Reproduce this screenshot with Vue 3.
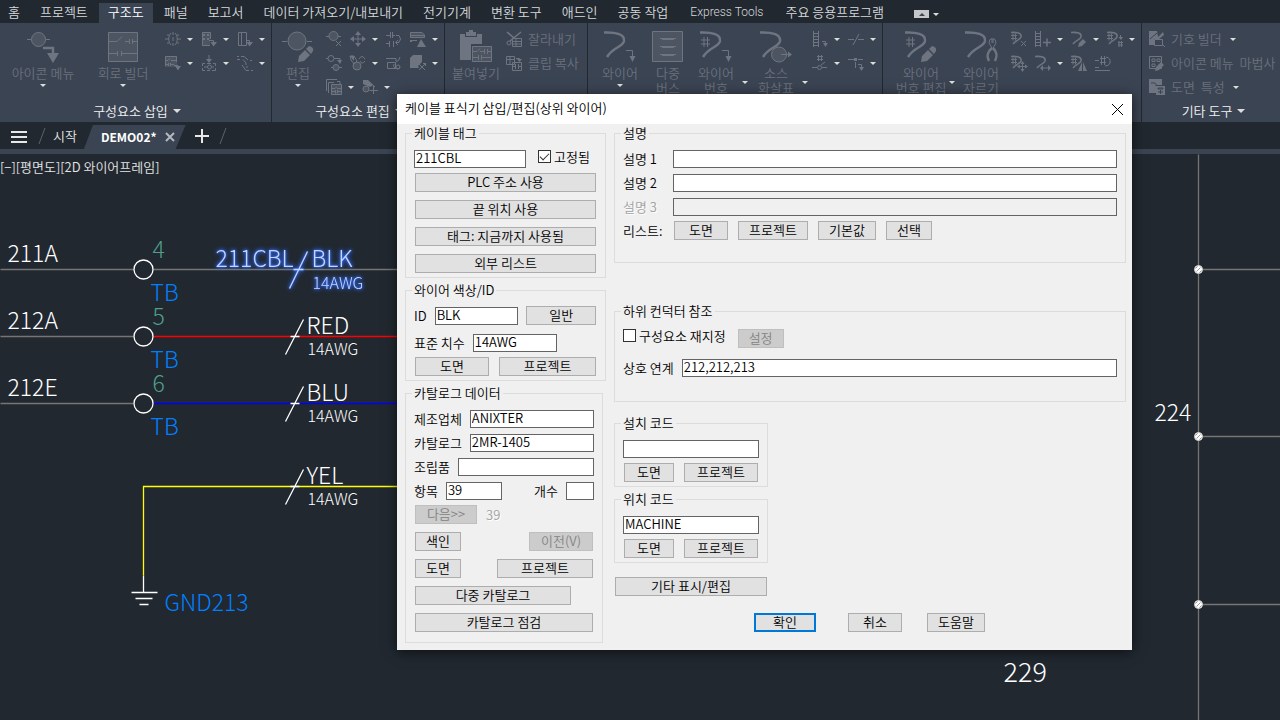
<template>
  <div class="cad-app">
    <!-- Menu tabs -->
    <nav class="menu-bar">
      <button
        v-for="item in menuItems"
        :key="item"
        type="button"
        :class="['menu-item', { active: item === activeMenu, latin: item === 'Express Tools' }]"
        @click="activeMenu = item"
      >
        {{ item }}
      </button>
      <button type="button" class="menu-toggle" aria-label="리본 최소화">
        <span class="toggle-box"><span class="caret up"></span></span>
        <span class="caret small"></span>
      </button>
    </nav>

    <!-- Ribbon -->
    <div class="ribbon">
      <section v-for="panel in panels" :key="panel.id" :class="['panel', panel.id]">
        <div class="panel-body">
          <button v-for="(big, i) in panel.big" :key="i" type="button" class="big-button" disabled>
            <span class="big-main">
              <RibbonIcon :name="big.icon" :size="32" />
              <span class="big-label">{{ big.label }}</span>
              <span v-if="big.caret === 'below'" class="caret small"></span>
            </span>
            <span v-if="big.caret === 'side'" class="caret small side"></span>
          </button>
          <div class="tool-rows">
            <div v-for="(row, r) in panel.rows" :key="r" class="tool-row">
              <button
                v-for="tool in row"
                :key="tool.icon"
                type="button"
                :class="['tool', { 'with-caret': tool.caret }]"
                :aria-label="tool.label ? null : tool.icon"
                disabled
              >
                <RibbonIcon :name="tool.icon" :size="16" />
                <span v-if="tool.label" class="tool-label">{{ tool.label }}</span>
                <span v-if="tool.caret" class="caret small"></span>
              </button>
            </div>
          </div>
        </div>
        <div class="panel-title">
          <template v-if="panel.title">{{ panel.title }}<span class="caret"></span></template>
        </div>
      </section>
    </div>

    <!-- Document tabs -->
    <div class="doc-tabs">
      <button type="button" class="hamburger" aria-label="메뉴">
        <span></span><span></span><span></span>
      </button>
      <svg class="slash" width="8" height="18" viewBox="0 0 8 18"><path d="M1 17L7 1" /></svg>
      <button type="button" class="doc-tab">시작</button>
      <div class="doc-tab current">
        <span>DEMO02*</span>
        <button type="button" class="tab-close" aria-label="닫기">
          <svg width="10" height="10" viewBox="0 0 10 10"><path d="M1 1L9 9M9 1L1 9" /></svg>
        </button>
      </div>
      <button type="button" class="tab-add" aria-label="새 도면">
        <svg width="14" height="14" viewBox="0 0 14 14"><path d="M7 0V14M0 7H14" /></svg>
      </button>
      <svg class="slash" width="8" height="18" viewBox="0 0 8 18"><path d="M1 17L7 1" /></svg>
    </div>

    <!-- Drawing area -->
    <main class="drawing">
      <div class="view-controls">[−][평면도][2D 와이어프레임]</div>
      <svg class="schematic" width="100%" height="100%">
        <!-- Half pixel shift keeps the one pixel lines on the grid -->
        <g transform="translate(0.5 0.5)">
          <!-- Right hand ladder -->
          <line class="wire" x1="1198" y1="0" x2="1198" y2="100%" />
          <g v-for="y in [115, 282, 450]" :key="y">
            <line class="wire" x1="1198" :y1="y" x2="100%" :y2="y" />
            <circle class="node" cx="1198" :cy="y" r="4" />
            <path class="hatch" :d="`M1195 ${y - 1}l2 -2M1196 ${y + 2}l4 -4M1199 ${y + 3}l2 -2`" />
          </g>

          <!-- Terminals and wires -->
          <g v-for="t in terminals" :key="t.no">
            <line class="wire" x1="0" :y1="t.y" x2="133" :y2="t.y" />
            <line class="wire" :class="t.wire" x1="153" :y1="t.y" x2="420" :y2="t.y" />
            <circle class="terminal" cx="143" :cy="t.y" r="9.5" />
            <text class="cad" x="7" :y="t.y - 8">{{ t.name }}</text>
            <text class="cad pin" x="152" :y="t.y - 12">{{ t.no }}</text>
            <text class="cad blue-text" x="150" :y="t.y + 31">TB</text>
          </g>

          <!-- Ground -->
          <path class="wire yellow" d="M420 332H143V421" />
          <path class="ground" d="M143 421V438M131 438H157M135 444H152M139 450H148" />
          <text class="cad blue-text" x="164" y="456">GND213</text>

          <!-- Cable markers -->
          <g v-for="m in markers" :key="m.color">
            <path class="marker" :d="`M285 ${m.y + 18}L303 ${m.y - 17}M290 ${m.y}H299`" />
            <text class="cad" x="306" :y="m.y - 3">{{ m.color }}</text>
            <text class="cad gauge" x="307" :y="m.y + 18">14AWG</text>
          </g>
          <g class="selected">
            <path class="marker" d="M289 134L307 97M293 115H303" />
            <text class="cad" x="215" y="112">211CBL</text>
            <text class="cad" x="311" y="112">BLK</text>
            <text class="cad gauge" x="312" y="134">14AWG</text>
          </g>

          <text class="cad" x="1154" y="266">224</text>
          <text class="cad large" x="1003" y="527">229</text>
        </g>
      </svg>
    </main>

    <!-- Cable marker dialog -->
    <div class="dialog" role="dialog" aria-labelledby="dialog-title">
      <header class="dialog-header">
        <h1 id="dialog-title">케이블 표식기 삽입/편집(상위 와이어)</h1>
        <button type="button" class="dialog-close" aria-label="닫기">
          <svg width="11" height="11" viewBox="0 0 11 11"><path d="M0 0L11 11M11 0L0 11" /></svg>
        </button>
      </header>

      <div class="dialog-body">
        <form class="column-left" @submit.prevent>
          <fieldset class="tag-group">
            <legend>케이블 태그</legend>
            <div class="row tag-row">
              <input id="tag" v-model="form.tag" type="text" aria-label="케이블 태그" class="w112" />
              <input id="fixed" v-model="form.fixed" type="checkbox" />
              <label for="fixed">고정됨</label>
            </div>
            <div class="stack">
              <button type="button">PLC 주소 사용</button>
              <button type="button">끝 위치 사용</button>
              <button type="button">태그: 지금까지 사용됨</button>
              <button type="button">외부 리스트</button>
            </div>
          </fieldset>

          <fieldset class="color-group">
            <legend>와이어 색상/ID</legend>
            <div class="row">
              <label for="wire-id">ID</label>
              <input id="wire-id" v-model="form.wireId" type="text" class="w84" />
              <button type="button" class="w70 push">일반</button>
            </div>
            <div class="row gauge-row">
              <label for="gauge">표준 치수</label>
              <input id="gauge" v-model="form.gauge" type="text" class="w84" />
            </div>
            <div class="row">
              <button type="button" class="w74">도면</button>
              <button type="button" class="grow">프로젝트</button>
            </div>
          </fieldset>

          <fieldset class="catalog-group">
            <legend>카탈로그 데이터</legend>
            <div class="fields">
              <div class="row">
                <label for="maker">제조업체</label>
                <input id="maker" v-model="form.maker" type="text" class="grow" />
              </div>
              <div class="row">
                <label for="catalog">카탈로그</label>
                <input id="catalog" v-model="form.catalog" type="text" class="grow" />
              </div>
              <div class="row">
                <label for="assembly">조립품</label>
                <input id="assembly" v-model="form.assembly" type="text" class="grow" />
              </div>
              <div class="row">
                <label for="item">항목</label>
                <input id="item" v-model="form.item" type="text" class="w56" />
                <label for="count" class="push">개수</label>
                <input id="count" v-model="form.count" type="text" class="w28" />
              </div>
            </div>
            <div class="stack">
              <div class="row">
                <button type="button" class="w62" disabled>다음&gt;&gt;</button>
                <span class="disabled-text">39</span>
              </div>
              <div class="row">
                <button type="button" class="w46">색인</button>
                <button type="button" class="w64 push" disabled>이전(V)</button>
              </div>
              <div class="row">
                <button type="button" class="w46">도면</button>
                <button type="button" class="w96 push">프로젝트</button>
              </div>
              <button type="button" class="w156">다중 카탈로그</button>
              <button type="button">카탈로그 점검</button>
            </div>
          </fieldset>
        </form>

        <form class="column-right" @submit.prevent>
          <fieldset class="desc-group">
            <legend>설명</legend>
            <div class="fields">
              <div class="row">
                <label for="desc1" class="desc-label">설명 1</label>
                <input id="desc1" v-model="form.desc1" type="text" class="grow" />
              </div>
              <div class="row">
                <label for="desc2" class="desc-label">설명 2</label>
                <input id="desc2" v-model="form.desc2" type="text" class="grow" />
              </div>
              <div class="row">
                <label for="desc3" class="desc-label disabled-text">설명 3</label>
                <input id="desc3" type="text" class="grow" disabled />
              </div>
            </div>
            <div class="row list-row">
              <span class="desc-label">리스트:</span>
              <button type="button" class="w54">도면</button>
              <button type="button" class="w70">프로젝트</button>
              <button type="button" class="w58">기본값</button>
              <button type="button" class="w46">선택</button>
            </div>
          </fieldset>

          <fieldset class="ref-group">
            <legend>하위 컨덕터 참조</legend>
            <div class="row ref-row">
              <input id="retag" v-model="form.retag" type="checkbox" />
              <label for="retag">구성요소 재지정</label>
              <button type="button" class="w46" disabled>설정</button>
            </div>
            <div class="row">
              <label for="xref">상호 연계</label>
              <input id="xref" v-model="form.xref" type="text" class="grow" />
            </div>
          </fieldset>

          <div class="code-groups">
            <fieldset v-for="code in codes" :key="code.id">
              <legend>{{ code.label }}</legend>
              <div class="row">
                <input :id="code.id" v-model="form[code.id]" type="text" :aria-label="code.label" class="grow" />
              </div>
              <div class="row code-buttons">
                <button type="button" class="w50">도면</button>
                <button type="button" class="grow">프로젝트</button>
              </div>
            </fieldset>
            <button type="button" class="misc-button">기타 표시/편집</button>
          </div>

          <div class="dialog-actions">
            <button type="submit" class="primary w62">확인</button>
            <button type="button" class="w54">취소</button>
            <button type="button" class="w58">도움말</button>
          </div>
        </form>
      </div>
    </div>
  </div>
</template>

<script setup>
import { h, reactive, ref } from 'vue'

const menuItems = [
  '홈', '프로젝트', '구조도', '패널', '보고서', '데이터 가져오기/내보내기', '전기기계',
  '변환 도구', '애드인', '공동 작업', 'Express Tools', '주요 응용프로그램'
]
const activeMenu = ref('구조도')

// Shared pieces of the wire icons
const WIRE = 'M0 2.5C11 2 21 4 20 11C19 17 9 17 3 27'
const SMALL_WIRE = 'M0 1.5C6 1 11 2 10 6C9 9 5 9 2 13'
const HASH = 'M1 10H10M1 14H10M4 7V17M7.5 7V17'
const SMALL_HASH = 'M0 4.5H6M0 7.5H6M2 2.5V9.5M4.5 2.5V9.5'
const PENCIL = 'M16 32L17 26L23 20L28 25L22 31ZM24 19L27 16Q32 17 31 21L29 24Z'

// s: thin strokes, b: bold strokes, f: solid shapes, m: muted shapes, k: cut-out strokes
const icons = {
  iconMenu: { m: 'M4.5 9.5a7 7 0 1 0 14 0a7 7 0 1 0 -14 0', s: 'M4.5 9.5a7 7 0 1 0 14 0a7 7 0 1 0 -14 0M0 9.5H4M19 9.5H23', b: 'M16 18H26V24', f: 'M20 23H32L26 33Z' },
  circuitBuilder: { m: 'M1.5 2.5H30.5V31.5H1.5Z', s: 'M1.5 2.5H30.5V31.5H1.5ZM2 11.5H10L15 6.5M18 11.5H22.5M22.5 9V14M25.5 9V14M25.5 11.5H30M2 23.5H10.5M10.5 21V26M14.5 21V26M14.5 23.5H30' },
  edit: { m: 'M6 11a9 9 0 1 0 18 0a9 9 0 1 0 -18 0', s: 'M6 11a9 9 0 1 0 18 0a9 9 0 1 0 -18 0M0 11.5H5M25 11.5H30', f: PENCIL },
  paste: { f: 'M0 4H5V7H17V4H22V14H11V30H0ZM6 2H9V0H13V2H16V6H6Z', m: 'M12 16.5H31.5V32H12Z', s: 'M12.5 16.5H31.5V31.5H12.5ZM13 21.5H17L20 18.5M20 21.5H24M24.5 19V24M27.5 19V24M27.5 21.5H31M13 27.5H18.5M18.5 25V30M21.5 25V30M21.5 27.5H31' },
  wire: { b: WIRE, s: 'M22 20.5H28.5V27', f: 'M25.5 26H31.5L28.5 32Z' },
  multiBus: { m: 'M.5 1.5H30.5V31.5H.5Z', s: 'M.5 1.5H30.5V31.5H.5ZM8 8.5H24M8 16.5H24M8 24.5H24M10 9.5H22M10 17.5H22M10 25.5H22' },
  wireNumber: { b: WIRE, s: HASH + 'M22 20.5H28.5V27', f: 'M25.5 26H31.5L28.5 32Z' },
  source: { b: WIRE, m: 'M11.5 24.5a7.5 7.5 0 1 0 15 0a7.5 7.5 0 1 0 -15 0', s: 'M11.5 24.5a7.5 7.5 0 1 0 15 0a7.5 7.5 0 1 0 -15 0M21 24.5H29', f: 'M28 21.5L32 24.5L28 27.5Z' },
  numberEdit: { b: WIRE, s: HASH, f: PENCIL },
  wireCut: { b: WIRE + 'M27 18C21 23 22 27 24 31M28 18C33 23 32 27 30 31', s: 'M27 18L24 13Q24 9 27 8.5V13M28 18L31 13Q31 9 28 8.5V13' },

  multiInsert: { s: 'M0 8H4M12 8H16M6 2C3 5 3 11 6 14M10 2C13 5 13 11 10 14M8 1V4M8 6V10M8 12V15M2 4H4M12 4H14M2 12H4M12 12H14' },
  plcInsert: { m: 'M1 1H9V15H1Z', s: 'M9.5 8V1.5H1.5V14.5H9M8 9.5H12.5V12', f: 'M2 3H4V5H2ZM6 3H8V5H6ZM2 7H4V9H2ZM6 7H8V9H6ZM9.5 11H16L12.5 15.5Z' },
  connector: { s: 'M1.5 1.5H4.5V14.5H1.5ZM4.5 1.5H9.5V14.5H4.5M9 9.5H12.5V12', f: 'M9.5 11H16L12.5 15.5Z' },
  circuitInsert: { m: 'M0 1H12V12H0Z', s: 'M.5 11V1.5H11.5V7M1 5.5H3L5 3.5M6 5.5H11M1 9.5H3M3.5 8V11M5.5 8V11M6 9.5H9M9 10.5H13V12', f: 'M10 11H16L13 15.5Z' },
  panelList: { s: 'M8 0V5M1.5 8.5H4M6 8.5H10M12 8.5H14.5V11M14.5 13V15.5H11M9 15.5H6M4 15.5H1.5V13M1.5 11V8.5M6.5 12a2 2 0 1 0 4 0a2 2 0 1 0 -4 0M3 12H6M11 12H13', f: 'M5 4H11L8 8Z' },
  brokenLines: { s: 'M0 1.5H2M4 1.5H7L11 5M0 4.5H3M6 4.5L9 8V10M9 12H11M13 5.5H15M5 10L9 15.5H12M14 15.5H16' },

  deleteComp: { m: 'M3 5a4.5 4.5 0 1 0 9 0a4.5 4.5 0 1 0 -9 0', s: 'M3 5a4.5 4.5 0 1 0 9 0a4.5 4.5 0 1 0 -9 0M0 5.5H3M12 5.5H15M10 10L15 15M15 10L10 15' },
  move: { s: 'M8 3V13M3 8H13', f: 'M8 0L11 4H5ZM8 16L11 12H5ZM0 8L4 5V11ZM16 8L12 5V11Z' },
  swap: { s: 'M0 4.5H4M4.5 1V7M6.5 1V7M7 4.5H9M0 12.5H3M3.5 10V16M7.5 10V16M10 4.5H13Q16 8 13 11.5H10M12 9L9.5 11.5L12 14' },
  align: { f: 'M11 8L16 16H7ZM0 9H7V10H2V11H0Z', m: 'M0 1H12L14 4V7H0Z', s: 'M.5 1.5H12L14.5 4V6.5H.5ZM1 4.5H14' },
  copyComp: { m: 'M7 12.5a3 3 0 1 0 6 0a3 3 0 1 0 -6 0', s: 'M2 3.5a3 3 0 1 0 6 0a3 3 0 1 0 -6 0M0 3.5H2M8 3.5H14V7M7 12.5a3 3 0 1 0 6 0a3 3 0 1 0 -6 0M5 12.5H7M13 12.5H16', f: 'M11 5H16L14 9Z' },
  retag: { m: 'M3 11a4 4 0 1 0 8 0a4 4 0 1 0 -8 0', s: 'M0 1H4L7 6L4 9L1 5ZM3 11a4 4 0 1 0 8 0a4 4 0 1 0 -8 0M9 4Q12 -1 15 4M15 6Q12 10 10 6', f: 'M0 1H4V6Z' },
  route: { s: 'M0 3.5H10V6M1.5 7.5H9.5V13.5H1.5ZM8 9a3 3 0 1 0 6 3M10 12a2 2 0 1 0 4 0a2 2 0 1 0 -4 0M10 7Q14 5 14 2' },
  explode: { f: 'M0 3L3 0H12V7L8 11L9 13H0Z', s: 'M9 9L15 15M15 9L9 15M13 8.5H16M15.5 8V11' },
  batchEdit: { m: 'M5 5H16V16H5Z', s: 'M.5 12V.5H11M2.5 14V3.5H8M11 2.5H14V5M5.5 5.5H15.5V15.5H5.5ZM6 9.5H9L11 7.5M11 9.5H15M6 12.5H9M9.5 11V14.5M11.5 11V14.5M12 12.5H15' },
  moveTag: { m: 'M1 10a3 3 0 1 0 6 0a3 3 0 1 0 -6 0', s: 'M1 2H6L13 8M1 10a3 3 0 1 0 6 0a3 3 0 1 0 -6 0M11.5 7V15M7.5 11.5H16', f: 'M1 1H6L11 6L8 8L1 5Z' },

  cut: { s: 'M1 12a2 2 0 1 0 4 0a2 2 0 1 0 -4 0M6.5 7.5H15.5V15.5H6.5ZM7 10.5H15M7 13H15M10 8V15', b: 'M1 1L8 7M15 1L4 10' },
  clipCopy: { s: 'M.5 1.5H8.5V9.5H.5ZM1 4.5H8M4 2V9M10 3.5H13.5V5M6.5 7.5H15.5V15.5H6.5ZM7 11.5H9M9.5 9V14M12.5 9V14M13 11.5H15', f: 'M11 4H16L13.5 7Z' },

  ladder: { s: 'M1.5 0V16M6.5 0V16M2 2.5H6M2 5.5H6M2 8.5H6M2 11.5H6M2 14.5H6M10 10.5H13.5V13', f: 'M11 12H16L13.5 16Z' },
  gap: { s: 'M0 8.5H6M10 8.5H16M5 14L11 3' },
  numberInline: { s: 'M5 1.5H11M5 4.5H11M6.5 0V6M9.5 0V6M0 12.5H5M5.5 12.5a2 2 0 1 0 4 0a2 2 0 1 0 -4 0M10 12.5H15M9 10L13 7' },
  tee: { s: 'M0 4.5H6M8 4.5H9M10 4.5H15M7.5 7V13M10 9.5H13.5V12', f: 'M6 3H9V6H6ZM11 12H16L13.5 16Z' },

  numberDelete: { b: SMALL_WIRE, s: SMALL_HASH + 'M10 10L15 15M15 10L10 15' },
  rungAdd: { s: 'M.5 0V16M5.5 0V16M1 2.5H5M1 5.5H5M1 8.5H5M1 11.5H5M1 14.5H5', b: 'M8 11.5H16M12 7.5V15.5' },
  wireEdit: { b: SMALL_WIRE, f: 'M7 16L8 12L12 8L15 11L11 15Z' },
  numberFix: { b: SMALL_WIRE, s: SMALL_HASH + 'M13.5 4V8M11 11.5H16M11 14H16M12 10V16M14.5 10V16', f: 'M11.5 6H16L14 9Z' },
  numberMove: { b: SMALL_WIRE, s: SMALL_HASH + 'M11.5 8V15M8 11.5H15', f: 'M11.5 6L13.5 9H9.5ZM11.5 17L13.5 14H9.5ZM6 11.5L9 9.5V13.5ZM17 11.5L14 9.5V13.5Z' },
  wireStretch: { b: SMALL_WIRE, s: 'M7 13H15', f: 'M5 13L8 10V16ZM16 13L13 10V16Z' },
  numberFlip: { b: SMALL_WIRE, s: SMALL_HASH, f: 'M11 7V16H7ZM12 7L16 16H12Z' },
  numberToggle: { s: 'M0 5.5H4M5 3.5H11M5 7.5H11M6.5 1V10M9.5 1V10M11 2Q16 3 15 8Q14 11 10 11M0 15.5H15M0 12.5H4' },

  symbolBuilder: { f: 'M0 0H8L9 6L14 1L15 4L10 8H5V14H0Z', s: 'M5.5 8.5H13.5V14.5H5.5ZM13 13L16 16', k: 'M1 8L8 2' },
  menuWizard: { s: 'M.5 1.5H12.5V13.5H.5ZM3 4H6V6.5H3ZM8 4H11V6.5H8ZM3 9H6V11.5H3Z', f: 'M6 16L7 12L12 7L15 10L10 15Z' },
  drawingProps: { f: 'M0 0H13V6H7V14H0ZM7 7H16V16H7Z', k: 'M2 4Q8 3 7 7M9 9H14V10H9ZM9 13H14M11.5 11V15' }
}

const COLOR = '#6f7580'
const RibbonIcon = (props) => {
  const icon = icons[props.name]
  const big = props.size === 32
  return h('svg', {
    width: props.size, height: props.size, overflow: 'visible',
    viewBox: `0 0 ${props.size} ${props.size}`, fill: 'none', 'aria-hidden': 'true'
  }, [
    icon.b && h('path', { d: icon.b, stroke: COLOR, 'stroke-width': big ? 2.5 : 1.6 }),
    icon.m && h('path', { d: icon.m, fill: '#4d5562' }),
    icon.s && h('path', { d: icon.s, stroke: COLOR }),
    icon.f && h('path', { d: icon.f, fill: COLOR }),
    icon.k && h('path', { d: icon.k, stroke: '#3b4453' })
  ])
}
RibbonIcon.props = ['name', 'size']

const tool = (icon, caret = false, label = '') => ({ icon, caret, label })

const panels = [
  {
    id: 'insert',
    title: '구성요소 삽입',
    big: [
      { icon: 'iconMenu', label: '아이콘 메뉴', caret: 'below' },
      { icon: 'circuitBuilder', label: '회로 빌더', caret: 'below' }
    ],
    rows: [
      [tool('multiInsert', true), tool('plcInsert', true), tool('connector', true)],
      [tool('circuitInsert', true), tool('panelList', true), tool('brokenLines', true)]
    ]
  },
  {
    id: 'modify',
    title: '구성요소 편집',
    big: [{ icon: 'edit', label: '편집', caret: 'below' }],
    rows: [
      [tool('deleteComp'), tool('move', true), tool('swap'), tool('align', true)],
      [tool('copyComp'), tool('retag', true), tool('route'), tool('explode', true)],
      [tool('batchEdit', true), tool('moveTag', true)]
    ]
  },
  {
    id: 'clipboard',
    big: [{ icon: 'paste', label: '붙여넣기' }],
    rows: [[tool('cut', false, '잘라내기')], [tool('clipCopy', false, '클립 복사')]]
  },
  {
    id: 'wires',
    big: [
      { icon: 'wire', label: '와이어', caret: 'below' },
      { icon: 'multiBus', label: '다중\n버스' },
      { icon: 'wireNumber', label: '와이어\n번호', caret: 'side' },
      { icon: 'source', label: '소스\n화살표', caret: 'side' }
    ],
    rows: [
      [tool('ladder', true), tool('gap', true)],
      [tool('numberInline', true), tool('tee', true)]
    ]
  },
  {
    id: 'wire-edit',
    big: [
      { icon: 'numberEdit', label: '와이어\n번호 편집', caret: 'side' },
      { icon: 'wireCut', label: '와이어\n자르기' }
    ],
    rows: [
      [tool('numberDelete'), tool('rungAdd', true), tool('wireEdit', true), tool('numberFix', true)],
      [tool('numberMove'), tool('wireStretch', true), tool('numberFlip'), tool('numberToggle')]
    ]
  },
  {
    id: 'other',
    title: '기타 도구',
    big: [],
    rows: [
      [tool('symbolBuilder', true, '기호 빌더')],
      [tool('menuWizard', false, '아이콘 메뉴  마법사')],
      [tool('drawingProps', true, '도면  특성')]
    ]
  }
]

// Y values are measured from the top of the drawing area
const terminals = [
  { no: '4', name: '211A', y: 115, wire: '' },
  { no: '5', name: '212A', y: 182, wire: 'red' },
  { no: '6', name: '212E', y: 249, wire: 'blue' }
]
const markers = [
  { color: 'RED', y: 182 },
  { color: 'BLU', y: 249 },
  { color: 'YEL', y: 332 }
]

const codes = [
  { id: 'install', label: '설치 코드' },
  { id: 'location', label: '위치 코드' }
]

const form = reactive({
  tag: '211CBL',
  fixed: true,
  wireId: 'BLK',
  gauge: '14AWG',
  maker: 'ANIXTER',
  catalog: '2MR-1405',
  assembly: '',
  item: '39',
  count: '',
  desc1: '',
  desc2: '',
  retag: false,
  xref: '212,212,213',
  install: '',
  location: 'MACHINE'
})
</script>

<style>
body {
  margin: 0;
  background: #212830;
}
</style>

<style scoped>
.cad-app {
  position: relative;
  display: flex;
  flex-direction: column;
  min-height: 100vh;
  overflow: hidden;
  background: #212830;
  color: #e6e6e6;
  font-family: "Noto Sans CJK KR", "Noto Sans", sans-serif;
  font-size: 13px;
  font-weight: 350;
  line-height: 16px;
}

button,
input {
  font: inherit;
}

button {
  box-sizing: border-box;
  margin: 0;
  padding: 0;
  border: 0;
  background: none;
  color: inherit;
}

.caret {
  flex: none;
  width: 0;
  height: 0;
  border: 4px solid transparent;
  border-top-color: #dddddd;
  border-bottom: 0;
}

.caret.small {
  border-width: 3px;
  border-bottom: 0;
}

.caret.up {
  border: 3px solid transparent;
  border-top: 0;
  border-bottom-color: #3b4453;
}

/* Menu tabs */
.menu-bar {
  display: flex;
  align-items: flex-end;
  height: 23px;
  white-space: nowrap;
}

.menu-item {
  height: 20px;
  margin: 0 1px;
  padding: 0 9px 2px;
  color: #d6d9dc;
}

.menu-item:first-child {
  margin-left: 0;
  padding-left: 8px;
}

.menu-item.active {
  background: #3b4453;
  color: #ffffff;
}

.menu-item.latin {
  padding: 0 11px 2px;
  font-family: Roboto, sans-serif;
  font-size: 12px;
}

.menu-toggle {
  display: flex;
  align-items: center;
  gap: 4px;
  height: 18px;
  margin-left: 20px;
}

.toggle-box {
  display: flex;
  align-items: center;
  justify-content: center;
  width: 15px;
  height: 8px;
  background: #c5c7cb;
}

/* Ribbon */
.ribbon {
  display: flex;
  height: 99px;
  background: #3b4453;
  white-space: nowrap;
}

.panel {
  box-sizing: border-box;
  flex: none;
  display: flex;
  flex-direction: column;
  border-right: 1px solid #212830;
}

.panel.insert { width: 272px; padding-left: 3px; }
.panel.modify { width: 173px; padding-left: 2px; }
.panel.clipboard { width: 143px; padding-left: 3px; }
.panel.wires { width: 295px; padding-left: 8px; }
.panel.wire-edit { width: 259px; padding-left: 12px; }
.panel.other { flex: 1; padding-left: 5px; border-right: 0; }

.panel-body {
  display: flex;
  height: 72px;
  padding-top: 7px;
}

.big-button {
  display: flex;
  align-items: flex-start;
  color: #6a717c;
}

.big-main {
  display: flex;
  flex-direction: column;
  align-items: center;
  width: 48px;
}

.insert .big-main { width: 80px; }
.clipboard .big-main { width: 56px; }
.wire-edit .big-button:first-child .big-main { width: 52px; }
.wire-edit .big-button:nth-child(2) .big-main { width: 44px; }

.big-label {
  margin-top: 3px;
  line-height: 15px;
  white-space: pre-line;
}

.wire-edit .big-label {
  white-space: pre;
}

.big-main .caret {
  margin-top: 4px;
}

.big-button .side {
  margin: 51px 4px 0 2px;
}

.tool-rows {
  display: flex;
  flex-direction: column;
  padding-left: 2px;
}

.modify .tool-rows { padding-left: 4px; }
.wires .tool-rows { padding-left: 0; }
.wire-edit .tool-rows { padding-left: 8px; }

.tool-row {
  display: flex;
  height: 24px;
}

.tool {
  display: flex;
  align-items: center;
  gap: 6px;
  min-width: 24px;
  height: 18px;
  color: #6a717c;
}

.tool.with-caret {
  min-width: 36px;
}

.tool-label {
  white-space: pre;
}

.tool-label + .caret {
  margin-left: 2px;
}

.panel-title {
  display: flex;
  align-items: center;
  justify-content: center;
  gap: 5px;
  height: 18px;
  color: #f2f2f2;
}

/* Document tabs */
.doc-tabs {
  display: flex;
  align-items: center;
  height: 27px;
  padding-left: 11px;
  border-bottom: 5px solid #3b4453;
}

.hamburger {
  display: flex;
  flex-direction: column;
  gap: 3px;
  width: 16px;
  margin: 2px 11px 0 0;
}

.hamburger span {
  height: 2px;
  background: #e8e8e8;
}

.slash {
  fill: none;
  stroke: #5a626e;
}

.doc-tab {
  padding: 0 7px;
}

.doc-tab.current {
  display: flex;
  align-items: center;
  align-self: flex-end;
  gap: 8px;
  height: 24px;
  padding: 0 11px 0 17px;
  background: #3b4453;
  clip-path: polygon(9px 0, 100% 0, calc(100% - 10px) 100%, 0 100%);
  color: #ffffff;
  font-size: 12px;
  font-weight: 700;
}

.tab-close svg,
.tab-add svg {
  display: block;
  fill: none;
  stroke: #b5b9bf;
  stroke-width: 2;
}

.tab-add {
  margin: 0 10px 0 9px;
}

.tab-add svg {
  stroke: #e8e8e8;
}

/* Drawing area */
.drawing {
  position: relative;
  flex: 1;
  min-height: 566px;
}

.view-controls {
  padding-top: 5px;
}

.schematic {
  position: absolute;
  inset: 0;
}

.wire {
  fill: none;
  stroke: #757573;
  stroke-width: 1.3;
}

.wire.red { stroke: #ff0000; }
.wire.blue { stroke: #0000ff; }
.wire.yellow { stroke: #ffff00; }

.terminal {
  fill: none;
  stroke: #ffffff;
  stroke-width: 1.3;
}

.node {
  fill: #ffffff;
  stroke: #cccccc;
}

.hatch {
  fill: none;
  stroke: #9a9a9a;
}

.ground,
.marker {
  fill: none;
  stroke: #ffffff;
  stroke-width: 1.3;
}

.cad {
  fill: #ffffff;
  font-size: 23px;
  font-weight: 300;
}

.cad.pin { fill: #4fa08a; }
.cad.blue-text { fill: #0080ff; }
.cad.gauge { font-size: 16px; }
.cad.large { font-size: 27px; }

.selected {
  filter: drop-shadow(0 0 1px #2f6bff) drop-shadow(0 0 2px #2f6bff);
}

.selected .cad { fill: #c3d6ff; }
.selected .marker { stroke: #c3d6ff; }

/* Dialog */
.dialog {
  position: absolute;
  top: 94px;
  left: 397px;
  width: 735px;
  background: #f0f0f0;
  box-shadow: 0 2px 12px rgba(0, 0, 0, 0.6);
  color: #000000;
  line-height: 14px;
}

.dialog-header {
  display: flex;
  align-items: center;
  justify-content: space-between;
  height: 30px;
  padding: 0 9px 0 8px;
  background: #ffffff;
}

.dialog-header h1 {
  margin: 0;
  padding-bottom: 2px;
  font-size: 13px;
  font-weight: inherit;
}

.dialog-close svg {
  display: block;
  fill: none;
  stroke: #000000;
}

.dialog-body {
  display: flex;
  align-items: flex-start;
  gap: 8px;
  padding: 2px 6px 7px 8px;
}

.column-left {
  display: flex;
  flex-direction: column;
  gap: 5px;
  width: 201px;
}

.column-right {
  flex: 1;
}

fieldset {
  box-sizing: border-box;
  min-width: 0;
  margin: 0;
  padding: 10px 8px 4px;
  border: 1px solid #dcdcdc;
}

legend {
  margin-left: -2px;
  padding: 0 2px;
}

.dialog-body button {
  height: 19px;
  margin: 0 1px;
  padding-bottom: 2px;
  border: 1px solid #adadad;
  background: #e1e1e1;
  line-height: 14px;
}

.dialog-body button:disabled {
  border-color: #bfbfbf;
  background: #cccccc;
  color: #838383;
}

.dialog-body button.primary {
  border: 2px solid #0078d7;
}

.dialog-body input[type="text"] {
  box-sizing: border-box;
  height: 18px;
  min-width: 0;
  margin: 0;
  padding: 0 1px 3px;
  border: 1px solid #646464;
  border-radius: 0;
  background: #ffffff;
  color: #000000;
}

.dialog-body input[type="text"]:disabled {
  background: #f0f0f0;
}

.dialog-body input[type="checkbox"] {
  appearance: none;
  box-sizing: border-box;
  width: 13px;
  height: 13px;
  margin: 0;
  border: 1px solid #333333;
  background: #ffffff;
}

.dialog-body input[type="checkbox"]:checked::before {
  content: "";
  display: block;
  width: 8px;
  height: 4px;
  margin: 2px 0 0 1px;
  border: solid #333333;
  border-width: 0 0 1px 1px;
  transform: rotate(-45deg);
}

.disabled-text {
  color: #a0a0a0;
  text-shadow: 1px 1px 0 #ffffff;
}

.row {
  display: flex;
  align-items: center;
  gap: 8px;
}

.stack,
.fields {
  display: flex;
  flex-direction: column;
}

.stack { gap: 8px; }
.fields { gap: 6px; margin-bottom: 5px; }

.grow { flex: 1; }
.push { margin-left: auto !important; }
.w28 { width: 28px; }
.w46 { width: 46px; }
.w50 { width: 50px; }
.w54 { width: 54px; }
.w56 { width: 56px; }
.w58 { width: 58px; }
.w62 { width: 62px; }
.w64 { width: 64px; }
.w70 { width: 70px; }
.w74 { width: 74px; }
.w84 { width: 84px; }
.w96 { width: 96px; }
.w112 { width: 112px; }
.w156 { width: 156px; }

.tag-row {
  align-items: flex-start;
  gap: 3px;
  margin-bottom: 5px;
}

.dialog-body .tag-row .w112 {
  margin-right: 9px;
}

.color-group {
  padding-top: 9px;
}

.gauge-row {
  margin: 9px 0 5px;
}

.catalog-group {
  width: 198px;
  padding-bottom: 10px;
}

.desc-group {
  padding-bottom: 22px;
}

.desc-label {
  width: 42px;
}

.ref-group {
  margin-top: 41px;
  padding-top: 11px;
  padding-bottom: 24px;
}

.ref-row {
  align-items: flex-start;
  gap: 3px;
  margin-bottom: 11px;
}

.dialog-body .ref-row button {
  margin-left: 9px;
}

.code-groups {
  display: flex;
  flex-direction: column;
  gap: 5px;
  width: 154px;
  margin-top: 14px;
}

.code-buttons {
  margin-top: 5px;
}

.dialog-body .code-groups .misc-button {
  margin-top: 9px;
}

.dialog-actions {
  display: flex;
  gap: 23px;
  margin-top: 17px;
  padding-left: 139px;
}

.dialog-body .dialog-actions .primary {
  margin-right: 8px;
}
</style>
